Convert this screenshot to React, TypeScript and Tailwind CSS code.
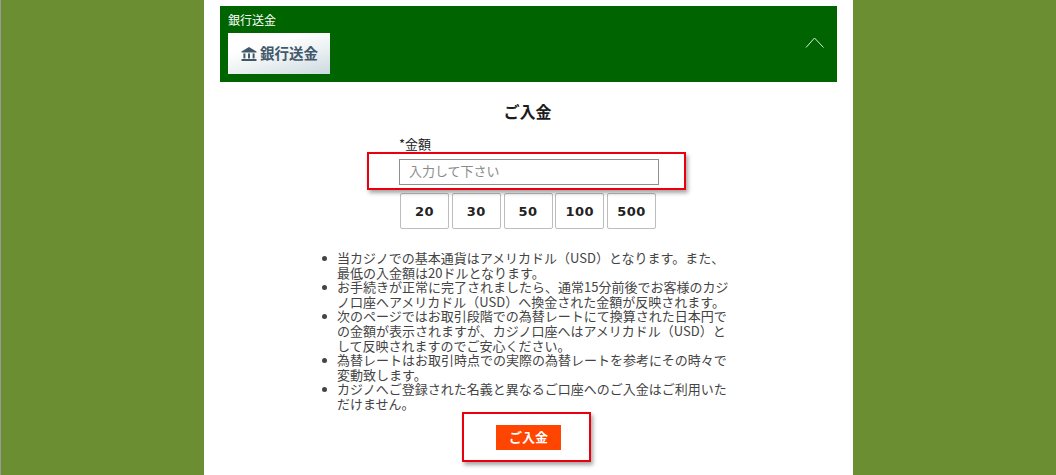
const font = { fontFamily: '"Noto Sans CJK JP", "Liberation Sans", sans-serif' };

const amounts = ["20", "30", "50", "100", "500"];

const notes = [
  ["当カジノでの基本通貨はアメリカドル（USD）となります。また、", "最低の入金額は20ドルとなります。"],
  ["お手続きが正常に完了されましたら、通常15分前後でお客様のカジ", "ノ口座へアメリカドル（USD）へ換金された金額が反映されます。"],
  ["次のページではお取引段階での為替レートにて換算された日本円で", "の金額が表示されますが、カジノ口座へはアメリカドル（USD）と", "して反映されますのでご安心ください。"],
  ["為替レートはお取引時点での実際の為替レートを参考にその時々で", "変動致します。"],
  ["カジノへご登録された名義と異なるご口座へのご入金はご利用いた", "だけません。"],
];

export default function App() {
  return (
    <div className="h-[475px] w-[1056px] overflow-hidden bg-[#6b8e33] border-l border-[#9a9a9a] flex justify-center" style={font}>
      <main className="w-[649px] bg-white h-full px-4 pt-[6px] flex flex-col">
        <section className="h-[76px] w-[617px] bg-[#006400] pl-2 pr-[12px] pt-[7px] flex justify-between">
          <div>
            <div className="text-[12px] leading-[14px] text-white">銀行送金</div>
            <div className="mt-[6px] h-[41px] w-[102px] pl-[13px] flex items-center gap-[3px] bg-[linear-gradient(165deg,#ffffff_30%,#e8eef0_65%,#ccdae0_100%)]">
              <svg width="16" height="16" viewBox="0 0 16 16" className="text-[#41586a]" fill="currentColor">
                <path d="M8 1 L15.5 5.5 V6.5 H0.5 V5.5 Z" />
                <rect x="2.4" y="7.4" width="2" height="5" />
                <rect x="7" y="7.4" width="2" height="5" />
                <rect x="11.6" y="7.4" width="2" height="5" />
                <rect x="0.5" y="13" width="15" height="2" />
              </svg>
              <span className="text-[14.5px] leading-none font-bold text-[#41586a]">銀行送金</span>
            </div>
          </div>
          <svg width="20" height="12" viewBox="0 0 20 12" className="mt-[23px] text-[#dfe9dc]" fill="none" stroke="currentColor" strokeWidth="1">
            <path d="M1 11.5 L9.5 2 L18.5 11.5" />
          </svg>
        </section>

        <h1 className="mt-[19px] h-[21px] pr-[2px] text-center text-[16px] leading-[21px] font-bold text-[#1c1c1c]">ご入金</h1>

        <div className="ml-[179px] mt-[14px] w-[260px]">
          <label className="block text-[13px] leading-[16px] text-[#222]">*金額</label>
          <div className="relative mt-[7px]">
            <input
              readOnly
              placeholder="入力して下さい"
              className="block h-[26px] w-[260px] border border-[#8f8f8f] px-[9px] pb-[3px] text-[13px] text-[#555] placeholder:text-[#8a8a8a] outline-none"
              style={font}
            />
            <span className="pointer-events-none absolute left-[-32px] top-[-7px] h-[38px] w-[319px] border-2 border-[#e9000c] shadow-[2px_3px_4px_rgba(0,0,0,0.35)]" />
          </div>
          <div className="mt-[8px] ml-[1px] flex gap-[2.75px]">
            {amounts.map((a) => (
              <button key={a} className="w-[49px] h-[36px] pt-[1px] rounded-[2px] border border-[#bdbdbd] bg-white text-[13px] font-bold tracking-[0.5px] text-[#222]" style={{ fontFamily: '"DejaVu Sans", sans-serif' }}>
                {a}
              </button>
            ))}
          </div>
        </div>

        <ul className="ml-[117px] mt-[22px] text-[13px] leading-[14.6px] text-[#444]">
          {notes.map((lines, i) => (
            <li key={i} className="relative whitespace-nowrap">
              <span className="absolute left-[-15px] top-[5px] h-[5px] w-[5px] rounded-full bg-[#444]" />
              {lines.map((l, j) => (
                <div key={j}>{l}</div>
              ))}
            </li>
          ))}
        </ul>

        <div className="relative mt-[13px] flex justify-center">
          <button className="h-[25px] w-[65px] bg-[#ff4500] text-[13px] font-bold text-white" style={font}>ご入金</button>
          <span className="pointer-events-none absolute left-[242px] top-[-13px] h-[50px] w-[129px] border-2 border-[#e9000c] shadow-[2px_3px_4px_rgba(0,0,0,0.35)]" />
        </div>
      </main>
    </div>
  );
}
